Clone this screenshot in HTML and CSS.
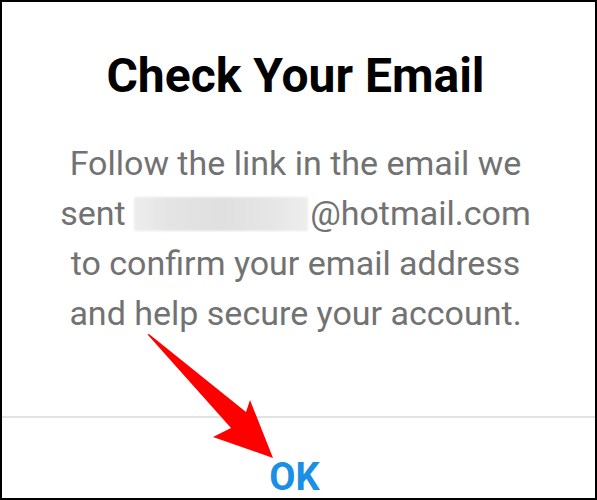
FILE: index.html
```html
<!DOCTYPE html>
<html lang="en">
<head>
<meta charset="utf-8">
<title>Check Your Email</title>
<link rel="stylesheet" href="styles.css">
</head>
<body>
<div class="frame">
  <div class="content">
    <h1 class="title">Check Your Email</h1>
    <p class="message">Follow the link in the email we<br>sent <span class="redacted"></span>@hotmail.com<br>to confirm your email address<br>and help secure your account.</p>
  </div>
  <div class="actions">
    <span class="ok">OK</span>
  </div>
  <svg class="arrow" width="597" height="500" viewBox="0 0 597 500" aria-hidden="true">
    <path d="M148 335 Q147 334 149 334 L246 412 L250 400 L273 458 L213 437 L231 428 Z" fill="#ff0000"/>
  </svg>
</div>
</body>
</html>
```
FILE: styles.css
```css
html, body {
  margin: 0;
  padding: 0;
  background: #ffffff;
}
.frame {
  position: relative;
  width: 597px;
  height: 500px;
  box-sizing: border-box;
  border: 2px solid #000000;
  background: #ffffff;
  display: flex;
  flex-direction: column;
  font-family: Roboto, "Liberation Sans", sans-serif;
  overflow: hidden;
}
.content {
  flex: 1;
  display: flex;
  flex-direction: column;
  align-items: center;
  padding: 46px 6px 0 0;
  border-bottom: 2px solid #e2e2e2;
}
.title {
  margin: 0;
  font-size: 48px;
  line-height: 56px;
  font-weight: 700;
  color: #000000;
  text-align: center;
}
.message {
  margin: 34px 0 0;
  font-size: 34px;
  line-height: 50px;
  color: #727272;
  text-align: center;
}
.redacted {
  display: inline-block;
  width: 174px;
  height: 34px;
  vertical-align: -6px;
  margin-right: 2px;
  background: linear-gradient(90deg, #eeeeee 0%, #e4e4e4 20%, #e0e0e0 50%, #e6e6e6 80%, #eeeeee 100%);
  filter: blur(1px);
}
.actions {
  height: 80px;
  box-sizing: border-box;
  padding-top: 40px;
  display: flex;
  justify-content: center;
}
.ok {
  font-size: 38px;
  line-height: 38px;
  font-weight: 700;
  color: #1a8fe6;
  margin-left: -8px;
}
.arrow {
  position: absolute;
  left: -2px;
  top: -2px;
}
```
